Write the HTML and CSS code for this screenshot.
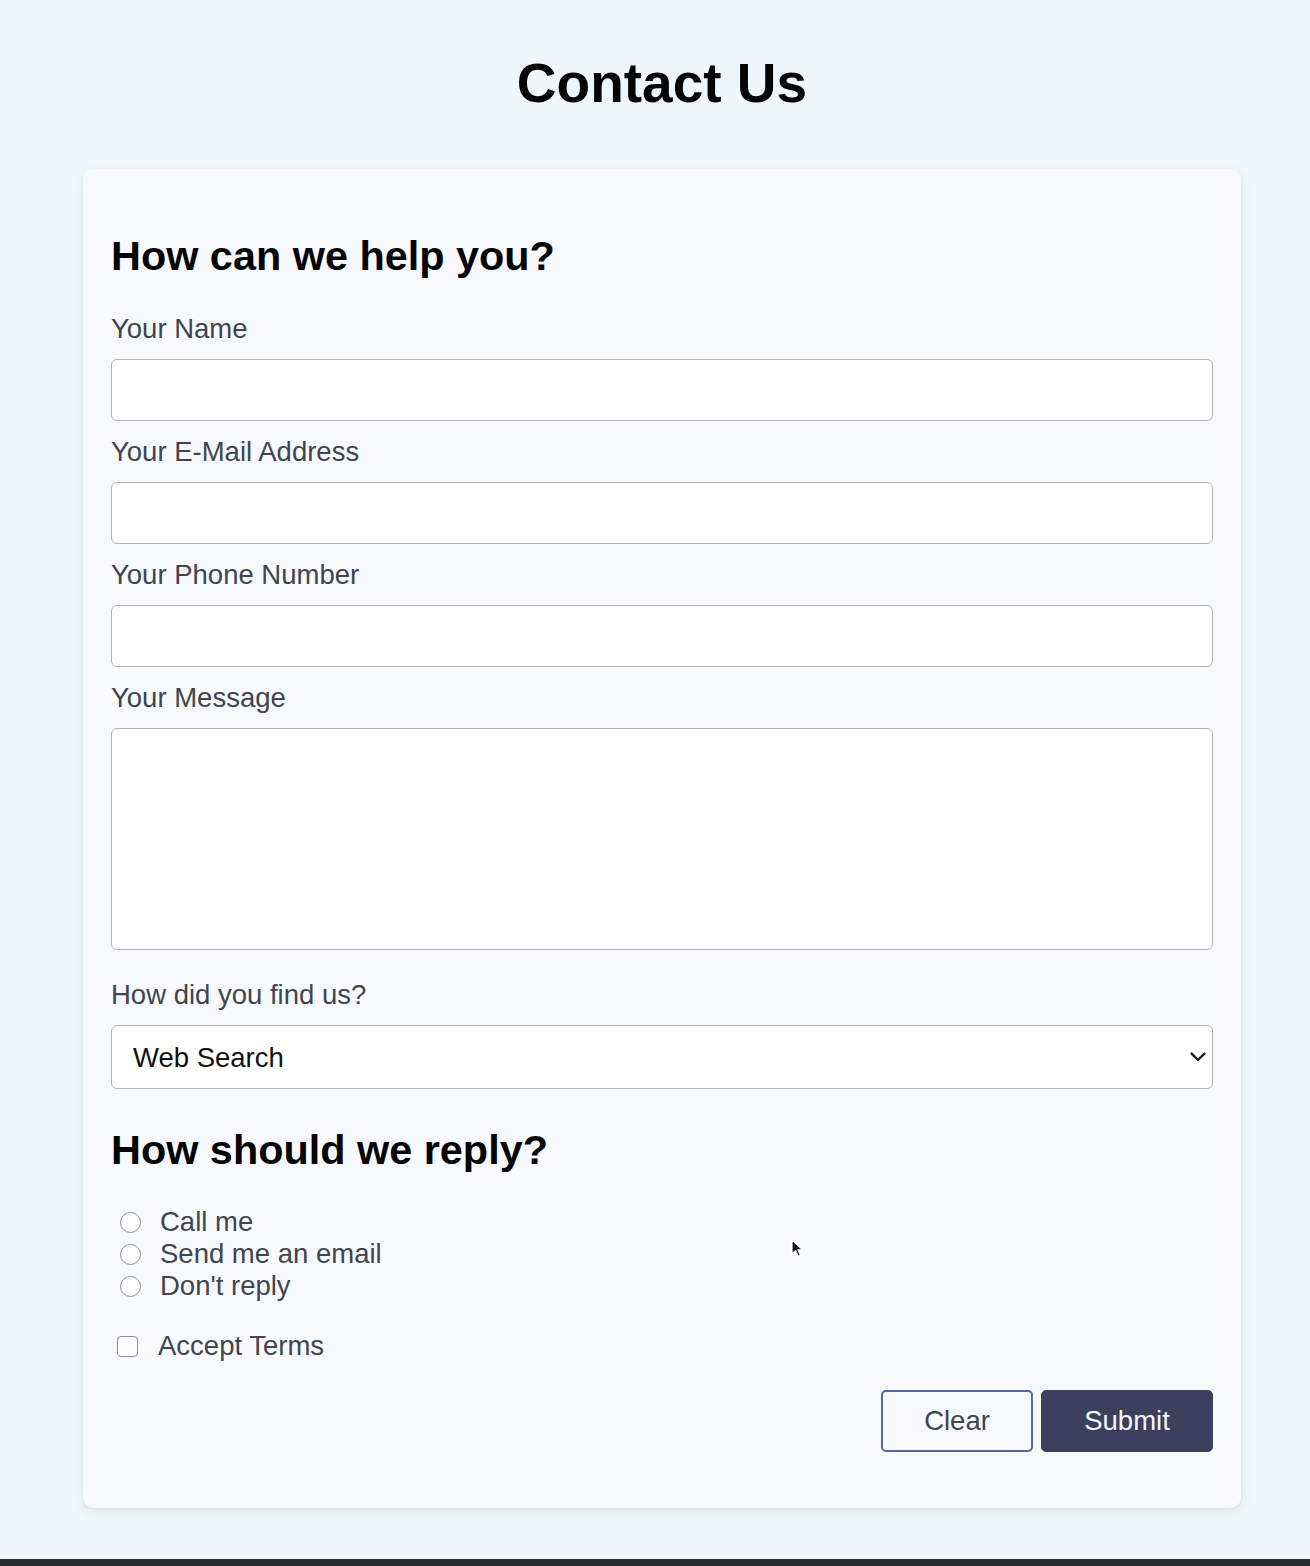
FILE: index.html
```html
<!DOCTYPE html>
<html>
<head>
    <meta charset="utf-8"/>
    <meta name="viewport" content="width=device-width,initial-scale=1">
    <title>Contact Us</title>
    <link rel="stylesheet" href="styles.css">
</head>
<body>
<div class="page">
    <h1 class="title">Contact Us</h1>
    <form class="card">
        <h2 class="section-title">How can we help you?</h2>

        <label class="field-label" for="name">Your Name</label>
        <input class="field" id="name" type="text"/>

        <label class="field-label" for="email">Your E-Mail Address</label>
        <input class="field" id="email" type="email"/>

        <label class="field-label" for="phone">Your Phone Number</label>
        <input class="field" id="phone" type="tel"/>

        <label class="field-label" for="message">Your Message</label>
        <textarea class="field field-area" id="message"></textarea>

        <label class="field-label" for="source">How did you find us?</label>
        <div class="select-wrap">
            <select class="field field-select" id="source">
                <option>Web Search</option>
                <option>Social Media</option>
                <option>A Friend</option>
                <option>Other</option>
            </select>
            <svg class="select-arrow" width="16" height="10" viewBox="0 0 16 10">
                <path d="M1.6 1.6 L8 8 L14.4 1.6" fill="none" stroke="#1e1e1e" stroke-width="2.4" stroke-linecap="round" stroke-linejoin="round"/>
            </svg>
        </div>

        <h2 class="section-title section-reply">How should we reply?</h2>
        <div class="options">
            <label class="option"><input class="radio" type="radio" name="reply"/>Call me</label>
            <label class="option"><input class="radio" type="radio" name="reply"/>Send me an email</label>
            <label class="option"><input class="radio" type="radio" name="reply"/>Don't reply</label>
        </div>
        <label class="option option-terms"><input class="check" type="checkbox"/>Accept Terms</label>

        <div class="actions">
            <button type="reset" class="btn btn-clear">Clear</button>
            <button type="submit" class="btn btn-submit">Submit</button>
        </div>

        <!-- mouse pointer seen in the screenshot -->
        <svg class="pointer" width="13" height="19" viewBox="0 0 13 19">
            <path d="M1 1 L1 15 L4.6 11.6 L7.2 17.4 L9.4 16.4 L6.9 10.8 L11.6 10.8 Z" fill="#111" stroke="#fff" stroke-width="1.2" stroke-linejoin="round"/>
        </svg>
    </form>
</div>
<div class="screen-edge"></div>
</body>
</html>
```

FILE: styles.css
```css
*{box-sizing:border-box;}
body{margin:0;background:#f0f7fa;font-family:"Liberation Sans",Arial,Helvetica,sans-serif;color:#41454d;}
.page{width:1158px;margin-left:83px;}
.title{margin:0;padding-top:51px;margin-bottom:54px;font-size:55px;line-height:64px;font-weight:bold;text-align:center;color:#050505;}

.card{position:relative;display:flex;flex-direction:column;padding:28px 28px 56px;background:#f7f9fd;border-radius:10px;box-shadow:0 1px 3px rgba(40,50,60,.08),0 4px 14px rgba(40,50,60,.07);}
.section-title{margin:35px 0 33px;font-size:41.4px;line-height:48px;font-weight:bold;color:#050505;}
.section-reply{margin:37px 0 32px;}

.field-label{display:block;font-size:27.5px;line-height:32px;margin-bottom:14px;color:#41454d;}
.field{display:block;width:100%;height:62px;margin:0 0 15px;padding:0 21px;border:1px solid #b3b3b6;border-radius:6px;background:#fff;font-family:inherit;font-size:27.5px;color:#111;outline:none;}
.field-area{height:222px;margin-bottom:29px;padding:14px 21px;resize:none;}
.select-wrap{position:relative;}
.field-select{height:64px;margin:0;-webkit-appearance:none;appearance:none;color:#111;}
.select-arrow{position:absolute;right:7px;top:27px;pointer-events:none;}

.options{display:flex;flex-direction:column;margin-bottom:28px;}
.option{display:flex;align-items:center;gap:19px;height:32px;padding-left:9px;font-size:27.5px;line-height:32px;color:#41454d;}
.radio{-webkit-appearance:none;appearance:none;width:21px;height:21px;margin:0;border:1px solid #8e8e92;border-radius:50%;background:#fff;}
.option-terms{padding-left:6px;gap:20px;margin-bottom:28px;}
.check{-webkit-appearance:none;appearance:none;width:21px;height:21px;margin:0;border:1px solid #8e8e92;border-radius:4px;background:#fff;}

.actions{display:flex;justify-content:flex-end;gap:8px;}
.btn{height:62px;border-radius:5px;font-family:inherit;font-size:27.5px;cursor:pointer;}
.btn-clear{width:152px;background:#f7f9fd;border:2px solid #5566a0;color:#41454d;}
.btn-submit{width:172px;background:#3b405f;border:1px solid #3b405f;color:#f4f5f8;}
.btn-submit:hover{background:#2e3350;}

.pointer{position:absolute;left:708px;top:1070px;}
.screen-edge{height:7px;margin-top:51px;background:#2b2c2f;}
```
